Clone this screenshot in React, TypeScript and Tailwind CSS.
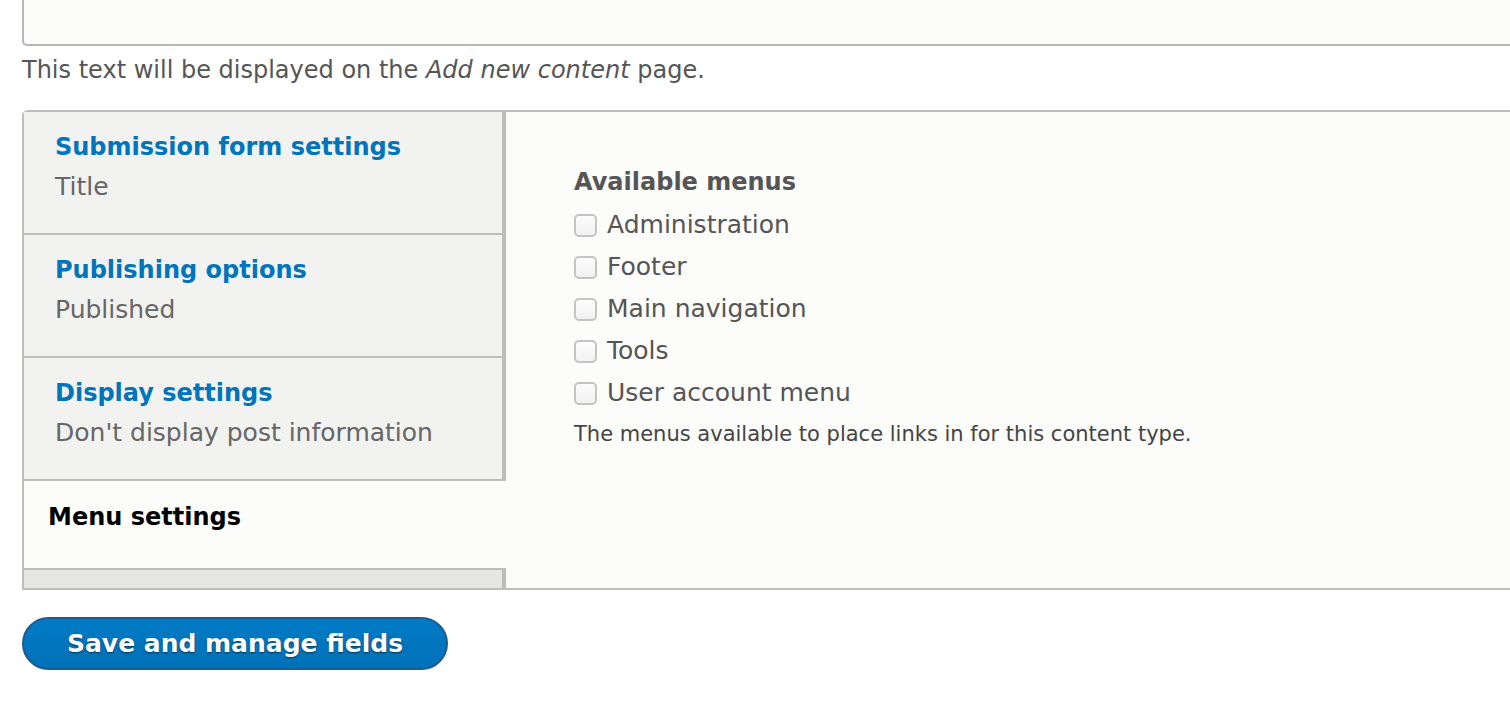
import React from 'react'

const font = "font-['DejaVu_Sans','Liberation_Sans',sans-serif]"

const tabs = [
  { title: 'Submission form settings', summary: 'Title' },
  { title: 'Publishing options', summary: 'Published' },
  { title: 'Display settings', summary: "Don't display post information" },
]

const menus = ['Administration', 'Footer', 'Main navigation', 'Tools', 'User account menu']

function Checkbox({ label }: { label: string }) {
  return (
    <label className="flex h-[42px] items-center gap-[10px]">
      <span className="h-[23px] w-[23px] shrink-0 rounded-[5px] border-2 border-[#c4c4c4] bg-gradient-to-b from-[#fdfdfd] to-[#f1f1f1]" />
      <span className="text-[25px] leading-[42px] text-[#555]">{label}</span>
    </label>
  )
}

export default function App() {
  return (
    <div className={`h-[720px] w-[1510px] overflow-hidden bg-white ${font}`}>
      <div className="pl-[22px]">
        {/* tail of the description textarea */}
        <div className="h-[46px] w-[1520px] rounded-bl-[5px] border-b-2 border-l-2 border-[#b8b8b8] bg-[#fcfcfa]" />
        <p className="mt-[10px] text-[24px] leading-[28px] text-[#555]">
          This text will be displayed on the <em>Add new content</em> page.
        </p>

        {/* vertical tabs */}
        <div className="mt-[26px] flex h-[480px] w-[1520px] rounded-tl-[6px] border-2 border-r-0 border-[#bdbdbd]">
          <ul className="flex w-[482px] shrink-0 flex-col bg-[#e6e6e3]">
            {tabs.map((t) => (
              <li
                key={t.title}
                className="border-r-4 border-b-2 border-[#bdbdbd] bg-[#f2f2f0] pt-[15px] pb-[26px] pl-[31px]"
              >
                <div className="text-[24px] font-bold leading-[40px] text-[#0074bd]">{t.title}</div>
                <div className="text-[25px] leading-[40px] text-[#666]">{t.summary}</div>
              </li>
            ))}
            <li className="h-[89px] border-b-2 border-[#bdbdbd] bg-[#fcfcfa] pt-[16px] pl-[24px]">
              <div className="text-[24px] font-bold leading-[40px] text-black">Menu settings</div>
            </li>
            <li className="flex-1 border-r-4 border-[#bdbdbd] bg-[#e6e6e3]" />
          </ul>

          <div className="flex-1 bg-[#fcfcfa] pt-[51px] pl-[68px]">
            <div className="text-[24px] font-bold leading-[38px] text-[#555]">Available menus</div>
            <div className="mt-[3px] flex flex-col">
              {menus.map((m) => (
                <Checkbox key={m} label={m} />
              ))}
            </div>
            <p className="mt-[8px] text-[21px] leading-[24px] text-[#444]">
              The menus available to place links in for this content type.
            </p>
          </div>
        </div>

        <button className="mt-[27px] h-[53px] w-[426px] rounded-full border-2 border-[#1e5c90] bg-gradient-to-b from-[#007bc6] to-[#0071b8] text-[25px] font-bold text-white [text-shadow:0_1px_2px_rgba(0,0,0,0.55)]">
          Save and manage fields
        </button>
      </div>
    </div>
  )
}
